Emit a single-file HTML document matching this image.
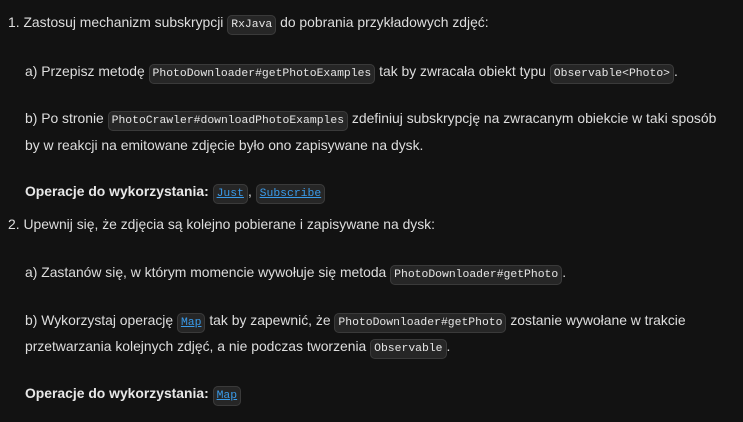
<!DOCTYPE html>
<html><head><meta charset="utf-8"><style>
body{margin:0;background:#121212;width:743px;height:422px;overflow:hidden;font-family:"Liberation Sans",sans-serif;font-size:13.9px;color:#dedede}
.l{position:absolute;white-space:nowrap;line-height:20px}
code{font-family:"Liberation Mono",monospace;font-size:11.4px;background:#262626;border:1px solid #3a3a3a;border-radius:5px;padding:3px 3px;color:#e6e6e6}
a code{color:#3a9bea;text-decoration:underline}
b{font-weight:bold;color:#e8e8e8}
</style></head><body>
<div class="l" style="left:8px;top:12px">1. Zastosuj mechanizm subskrypcji <code>RxJava</code> do pobrania przykładowych zdjęć:</div>
<div class="l" style="left:25px;top:61px">a) Przepisz metodę <code>PhotoDownloader#getPhotoExamples</code> tak by zwracała obiekt typu <code>Observable&lt;Photo&gt;</code>.</div>
<div class="l" style="left:25px;top:108px">b) Po stronie <code>PhotoCrawler#downloadPhotoExamples</code> zdefiniuj subskrypcję na zwracanym obiekcie w taki sposób</div>
<div class="l" style="left:25px;top:135px">by w reakcji na emitowane zdjęcie było ono zapisywane na dysk.</div>
<div class="l" style="left:25px;top:181px"><b>Operacje do wykorzystania:</b> <a><code>Just</code></a>, <a><code>Subscribe</code></a></div>
<div class="l" style="left:8px;top:214px">2. Upewnij się, że zdjęcia są kolejno pobierane i zapisywane na dysk:</div>
<div class="l" style="left:25px;top:262px">a) Zastanów się, w którym momencie wywołuje się metoda <code>PhotoDownloader#getPhoto</code>.</div>
<div class="l" style="left:25px;top:310px">b) Wykorzystaj operację <a><code>Map</code></a> tak by zapewnić, że <code>PhotoDownloader#getPhoto</code> zostanie wywołane w trakcie</div>
<div class="l" style="left:25px;top:336px">przetwarzania kolejnych zdjęć, a nie podczas tworzenia <code>Observable</code>.</div>
<div class="l" style="left:25px;top:383px"><b>Operacje do wykorzystania:</b> <a><code>Map</code></a></div>
</body></html>
